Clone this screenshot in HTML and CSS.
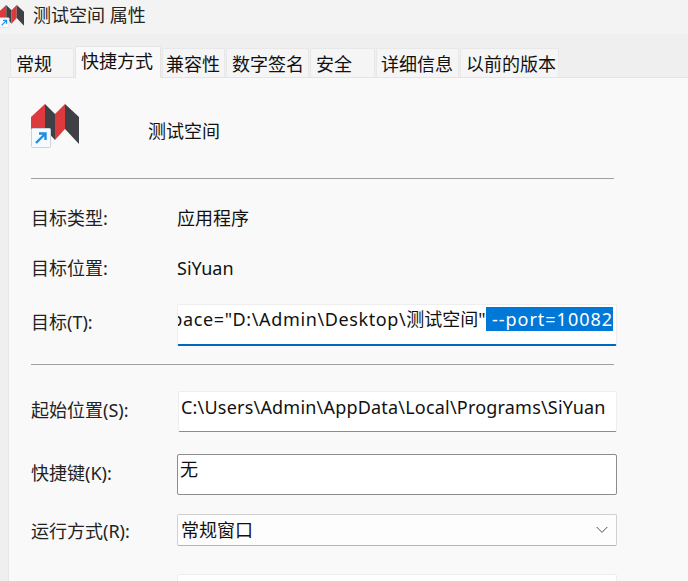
FILE: index.html
```html
<!DOCTYPE html>
<html lang="zh-CN">
<head>
<meta charset="utf-8">
<title>测试空间 属性</title>
<link rel="stylesheet" href="styles.css">
</head>
<body>
<svg class="defs" width="0" height="0" aria-hidden="true">
  <symbol id="app" viewBox="0 0 48 46">
    <path fill="#dc3a3c" d="M0 13 14 0V25L0 40Z"/>
    <path fill="#3e4046" d="M14 0 24 10V36L14 25Z"/>
    <path fill="#dc3a3c" d="M24 10 34 0V25L24 36Z"/>
    <path fill="#3e4046" d="M34 0 48 13V40L34 25Z"/>
    <rect x="0.5" y="24.5" width="19" height="19" rx="1" fill="#f6f9fd" stroke="#c9d3e0"/>
    <path fill="none" stroke="#1b8fe6" stroke-width="2.4" d="M5 39 14 30M8 29.5H14.5V36"/>
  </symbol>
</svg>
<header class="titlebar">
  <svg class="title-icon"><use href="#app"/></svg>
  <span>测试空间 属性</span>
</header>
<nav class="tabs">
  <div class="tab t1">常规</div>
  <div class="tab active">快捷方式</div>
  <div class="tab t3">兼容性</div>
  <div class="tab t4">数字签名</div>
  <div class="tab t5">安全</div>
  <div class="tab t6">详细信息</div>
  <div class="tab t7">以前的版本</div>
</nav>
<main class="panel">
  <div class="head">
    <svg class="app-icon"><use href="#app"/></svg>
    <span class="app-name">测试空间</span>
  </div>
  <hr class="rule first">
  <div class="row info r-type"><label>目标类型:</label><span class="val">应用程序</span></div>
  <div class="row info r-loc"><label>目标位置:</label><span class="val">SiYuan</span></div>
  <div class="row r-target">
    <label>目标(T):</label>
    <div class="field target"><span class="plain">--workspace="D:\Admin\Desktop\<span class="cjk">测试空间</span>"</span><span class="sel"> --port=10082</span></div>
  </div>
  <hr class="rule second">
  <div class="row r-start">
    <label>起始位置(S):</label>
    <div class="field start">C:\Users\Admin\AppData\Local\Programs\SiYuan</div>
  </div>
  <div class="row r-key">
    <label>快捷键(K):</label>
    <div class="field key">无</div>
  </div>
  <div class="row r-run">
    <label>运行方式(R):</label>
    <div class="field select"><span>常规窗口</span>
      <svg class="chev" width="12" height="8" viewBox="0 0 12 8"><path d="M.7 1 6 6.4 11.3 1" fill="none" stroke="#555" stroke-width="1"/></svg>
    </div>
  </div>
  <div class="row r-note"><div class="field note"></div></div>
</main>
</body>
</html>
```
FILE: styles.css
```css
* { box-sizing: border-box; }
html, body { margin: 0; height: 581px; overflow: hidden; }
body {
  display: flex;
  flex-direction: column;
  background: #efefef;
  color: #111;
  font: 18px/24px "Noto Sans", "Noto Sans CJK SC", sans-serif;
}
.defs { display: block; height: 0; }
.titlebar {
  height: 34px;
  flex: none;
  background: #f3f3f3;
  display: flex;
  align-items: flex-start;
  padding-top: 5px;
  color: #222;
}
.title-icon { width: 25px; height: 24px; margin-left: -1px; margin-right: 9px; flex: none; }
.titlebar span { line-height: 20px; }
.tabs {
  height: 43px;
  flex: none;
  display: flex;
  align-items: flex-end;
  padding-left: 10px;
  position: relative;
  z-index: 1;
}
.tab {
  height: 29px;
  border: 1px solid #e8e8e8;
  border-bottom: 0;
  background: #f5f5f5;
  padding: 2px 0 0 5px;
  margin-right: 1px;
  line-height: 26px;
  white-space: nowrap;
  border-radius: 2px 2px 0 0;
}
.t1 { width: 64px; }
.active { width: 86px; height: 32px; margin-bottom: -1px; background: #f9f9f9; border-color: #e4e4e4; padding-top: 1px; }
.t3 { width: 63px; padding-left: 3px; }
.t4 { width: 83px; }
.t5 { width: 65px; }
.t6 { width: 83px; padding-left: 4px; }
.t7 { width: 99px; margin-right: 0; }
.panel {
  flex: 1;
  margin-left: 8px;
  background: #f9f9f9;
  border-top: 1px solid #e4e4e4;
  border-left: 1px solid #e6e6e6;
  padding-left: 22px;
  min-height: 0;
  overflow: hidden;
}
.head { display: flex; align-items: flex-start; padding-top: 26px; height: 100px; }
.app-icon { width: 48px; height: 46px; flex: none; }
.app-name { margin-left: 69px; margin-top: 15px; line-height: 24px; }
.rule { margin: 0; border: 0; height: 1px; background: #a0a0a0; width: 583px; }
.row { display: flex; align-items: flex-start; }
.row label { width: 146px; flex: none; color: #222; }
.info { height: 24px; }
.r-type { margin-top: 27px; }
.r-loc { margin-top: 26px; }
.r-target { margin-top: 24px; }
.r-target label { padding-top: 6px; }
.second { margin-top: 18px; }
.r-start { margin-top: 26px; }
.r-start label { padding-top: 7px; }
.r-key { margin-top: 22px; }
.r-key label { padding-top: 7px; }
.r-run { margin-top: 19px; }
.r-run label { padding-top: 5px; }
.r-note { margin-top: 28px; padding-left: 146px; }
.field {
  height: 41px;
  background: #fff;
  border: 1px solid #eeeeee;
  border-bottom-color: #8c8c8c;
  border-radius: 2px;
  white-space: nowrap;
  overflow: hidden;
}
.target {
  width: 440px;
  height: 42px;
  display: flex;
  align-items: flex-start;
  justify-content: flex-end;
  padding: 2px 3px 0 2px;
  border-bottom: 2px solid #0067c0;
  line-height: 24px;
}
.plain, .sel { flex: none; white-space: pre; }
.plain { letter-spacing: .62px; }
.cjk { letter-spacing: 0; }
.sel { background: #0078d7; color: #fff; letter-spacing: .98px; }
.start { width: 439px; margin-left: 1px; padding: 3px 0 0 2px; letter-spacing: .2px; }
.key {
  width: 440px;
  border-color: #8c8c8c;
  padding: 2px 0 0 2px;
}
.select {
  width: 440px;
  height: 32px;
  background: #fdfdfd;
  border-color: #d0d0d0;
  border-bottom-color: #b4b4b4;
  display: flex;
  align-items: center;
  justify-content: space-between;
  padding: 0 8px 0 3px;
}
.note { width: 440px; height: 40px; border-bottom-color: #eeeeee; }
```
